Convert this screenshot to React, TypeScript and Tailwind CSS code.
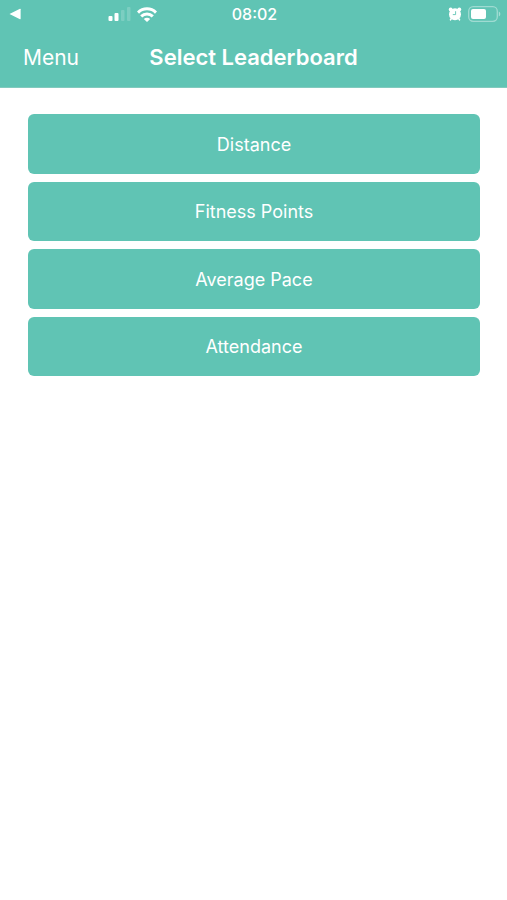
const leaderboards = ["Distance", "Fitness Points", "Average Pace", "Attendance"];

function SignalIcon() {
  return (
    <svg width="23" height="14" viewBox="0 0 23 14" fill="white" aria-hidden="true">
      <rect x="0.5" y="9" width="4" height="5" rx="1" />
      <rect x="6.5" y="6" width="4" height="8" rx="1" />
      <rect x="13" y="3" width="3.5" height="11" rx="1" opacity="0.18" />
      <rect x="19" y="0" width="3.5" height="14" rx="1" opacity="0.18" />
    </svg>
  );
}

function WifiIcon() {
  return (
    <svg width="20" height="15" viewBox="0 0 20 15" fill="none" stroke="white" strokeWidth="3" aria-hidden="true">
      <path d="M1 5.6C6 .6 14 .6 19 5.6" />
      <path d="M4.2 9.4C7.5 6.2 12.5 6.2 15.8 9.4" />
      <path d="M6.8 12C8.6 10.2 11.4 10.2 13.2 12L10 15Z" fill="white" stroke="none" />
    </svg>
  );
}

function AlarmIcon() {
  return (
    <svg width="14" height="14" viewBox="0 0 14 14" aria-hidden="true">
      <path d="M3.4 11.6 2.5 12.8M10.6 11.6 11.5 12.8" stroke="white" strokeWidth="1.6" strokeLinecap="round" />
      <circle cx="2.7" cy="2.5" r="1.9" fill="white" />
      <circle cx="11.3" cy="2.5" r="1.9" fill="white" />
      <circle cx="7" cy="7.2" r="6" fill="white" />
      <path d="M7.6 4.6V7.6H5.2" stroke="#60c4b4" strokeWidth="0.9" fill="none" strokeLinecap="round" />
    </svg>
  );
}

function BatteryIcon() {
  return (
    <svg width="33" height="16" viewBox="0 0 33 16" aria-hidden="true">
      <rect x="0.7" y="0.7" width="28.6" height="14.6" rx="4.5" fill="none" stroke="white" strokeWidth="1.3" opacity="0.4" />
      <rect x="3" y="3" width="15" height="10" rx="2" fill="white" />
      <path d="M30.8 5.5C32.8 6.4 32.8 9.6 30.8 10.5Z" fill="white" opacity="0.45" />
    </svg>
  );
}

export default function App() {
  return (
    <div className="min-h-screen bg-white font-['Inter','Liberation_Sans',sans-serif] text-white">
      <header className="border-b border-[#82cabe] bg-[#60c4b4]">
        <div className="grid h-7 grid-cols-[1fr_auto_1fr] items-center pr-1.5 pl-2">
          <div className="flex items-center">
            <svg width="13" height="12" viewBox="0 0 13 12" fill="white" aria-hidden="true">
              <path d="M1.5 6 12 .8Q12.6 .6 12.6 1.2V10.8Q12.6 11.4 12 11.2Z" />
            </svg>
            <div className="ml-[87px] flex items-center gap-1.5">
              <SignalIcon />
              <WifiIcon />
            </div>
          </div>
          <time className="text-base font-medium">08:02</time>
          <div className="flex items-center justify-end gap-1.5">
            <AlarmIcon />
            <BatteryIcon />
          </div>
        </div>
        <div className="grid h-[59px] grid-cols-[1fr_auto_1fr] items-center px-[23px]">
          <button type="button" className="justify-self-start text-[21px]">Menu</button>
          <h1 className="text-[22px] font-semibold">Select Leaderboard</h1>
        </div>
      </header>
      <main className="pt-[26px] pr-[27px] pl-7">
        <div className="grid h-[262px] grid-rows-4 gap-2">
          {leaderboards.map((name) => (
            <button key={name} type="button" className="rounded-md bg-[#60c4b4] pt-0.5 text-lg">
              {name}
            </button>
          ))}
        </div>
      </main>
    </div>
  );
}
